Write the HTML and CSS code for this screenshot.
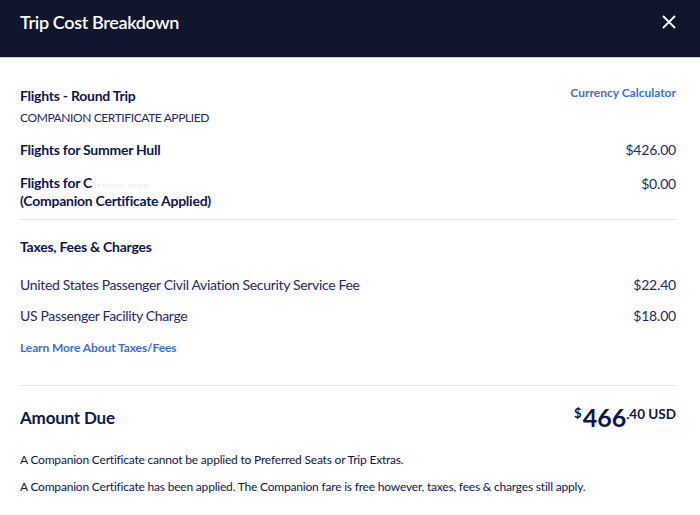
FILE: index.html
```html
<!DOCTYPE html>
<html>
<head>
<meta charset="utf-8">
<link rel="stylesheet" href="styles.css">
</head>
<body>
<div class="modal">
  <header class="head">
    <h1 class="title">Trip Cost Breakdown</h1>
    <svg class="close" width="14" height="14" viewBox="0 0 14 14"><path d="M1 1L13 13M13 1L1 13" stroke="#fff" stroke-width="1.8" fill="none"/></svg>
  </header>
  <div class="body">
    <section class="sec sec-flights">
      <div class="row top">
        <div>
          <div class="bold">Flights - Round Trip</div>
          <div class="caps">COMPANION CERTIFICATE APPLIED</div>
        </div>
        <a class="link">Currency Calculator</a>
      </div>
      <div class="row pax">
        <div class="bold">Flights for Summer Hull</div>
        <div class="amt">$426.00</div>
      </div>
      <div class="row pax2">
        <div class="bold">Flights for C<span class="redact">annnnn nnnn</span><br>(Companion Certificate Applied)</div>
        <div class="amt">$0.00</div>
      </div>
    </section>
    <section class="sec sec-taxes">
      <div class="bold">Taxes, Fees &amp; Charges</div>
      <div class="row fee fee1">
        <div>United States Passenger Civil Aviation Security Service Fee</div>
        <div class="amt">$22.40</div>
      </div>
      <div class="row fee">
        <div>US Passenger Facility Charge</div>
        <div class="amt">$18.00</div>
      </div>
      <a class="link learn">Learn More About Taxes/Fees</a>
    </section>
    <section class="sec sec-total">
      <div class="row due">
        <div class="due-label">Amount Due</div>
        <div class="total"><span class="cur">$</span><span class="big">466</span><span class="cents">.40 USD</span></div>
      </div>
      <p class="note">A Companion Certificate cannot be applied to Preferred Seats or Trip Extras.</p>
      <p class="note">A Companion Certificate has been applied. The Companion fare is free however, taxes, fees &amp; charges still apply.</p>
    </section>
  </div>
</div>
</body>
</html>
```
FILE: styles.css
```css
* { box-sizing: border-box; }
html, body { margin: 0; padding: 0; background: #fff; }
body {
  font-family: Lato, "Open Sans", sans-serif;
  color: #17215c;
  width: 700px;
  height: 515px;
  overflow: hidden;
}
.head {
  height: 58px;
  background: #11162f;
  border-bottom: 1px solid #c9c9c9;
  display: flex;
  align-items: flex-start;
  justify-content: space-between;
  padding: 10px 24px 0 20px;
}
.title {
  margin: 0;
  color: #fff;
  font-size: 18px;
  font-weight: 600;
  letter-spacing: -0.35px;
  line-height: 24px;
}
.close { margin-top: 5px; margin-right: 0; }
.body { padding: 0 24px 0 20px; }
.sec { border-bottom: 1px solid #e4e4ec; }
.sec-flights { padding-top: 29px; padding-bottom: 10px; }
.row { display: flex; justify-content: space-between; align-items: flex-start; }
.bold { font-weight: 700; font-size: 14px; line-height: 17px; color: #0c1652; letter-spacing: -0.25px; }
.caps { font-size: 12px; line-height: 15px; margin-top: 6px; color: #1c2a66; letter-spacing: -0.4px; }
.link { color: #3b6fd6; font-weight: 700; font-size: 12px; line-height: 15px; }
.top .link { margin-top: -2px; }
.amt { font-size: 14px; line-height: 17px; color: #1c2a66; letter-spacing: -0.2px; }
.pax { margin-top: 16px; }
.pax2 { margin-top: 17px; }
.pax2 .bold { line-height: 16px; }
.redact { color: #e8e8ee; font-weight: 400; font-size: 8px; letter-spacing: 1px; }
.sec-taxes { padding-top: 18px; padding-bottom: 30px; }
.fee { font-size: 14px; line-height: 17px; color: #1c2a66; letter-spacing: -0.33px; }
.fee1 { margin-top: 21px; }
.fee + .fee { margin-top: 14px; }
.learn { display: block; margin-top: 16px; letter-spacing: -0.1px; }
.sec-total { border-bottom: none; padding-top: 19px; }
.due { align-items: center; }
.due-label { font-size: 17px; font-weight: 700; color: #0c1652; line-height: 20px; letter-spacing: -0.2px; }
.total { color: #0c1652; font-weight: 700; display: flex; align-items: flex-start; line-height: 1; }
.cur { font-size: 13px; margin-top: 2px; margin-right: 1px; }
.big { font-size: 25px; }
.cents { font-size: 13.5px; margin-top: 3px; }
.note { margin: 0; font-size: 12px; line-height: 15px; color: #0c1652; letter-spacing: -0.2px; }
.due + .note { margin-top: 22px; }
.note + .note { margin-top: 12px; }
```
